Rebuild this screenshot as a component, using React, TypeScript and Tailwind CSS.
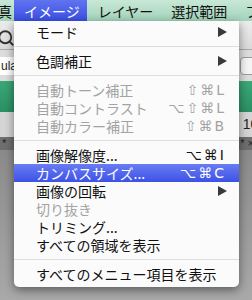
import { Search } from "lucide-react";

type Item =
  | { label: string; keys?: string; sub?: boolean; disabled?: boolean; active?: boolean }
  | "sep";

const items: Item[] = [
  { label: "モード", sub: true },
  "sep",
  { label: "色調補正", sub: true },
  "sep",
  { label: "自動トーン補正", keys: "⇧⌘L", disabled: true },
  { label: "自動コントラスト", keys: "⌥⇧⌘L", disabled: true },
  { label: "自動カラー補正", keys: "⇧⌘B", disabled: true },
  "sep",
  { label: "画像解像度...", keys: "⌥⌘I" },
  { label: "カンバスサイズ...", keys: "⌥⌘C", active: true },
  { label: "画像の回転", sub: true },
  { label: "切り抜き", disabled: true },
  { label: "トリミング..." },
  { label: "すべての領域を表示" },
  "sep",
  { label: "すべてのメニュー項目を表示" },
];

const jp = "font-['Noto_Sans_CJK_JP','Noto_Sans',sans-serif]";

function Triangle({ color }: { color: string }) {
  return (
    <svg width="9" height="10" viewBox="0 0 9 10">
      <path d="M0 0 L9 5 L0 10 Z" fill={color} />
    </svg>
  );
}

function Menu() {
  return (
    <div className="absolute left-[14px] top-[21px] w-[225px] rounded-b-[5px] bg-[#fbfbfb] pt-[2px] pb-[4px] shadow-[0_3px_10px_rgba(0,0,0,0.45)]">
      {items.map((it, i) =>
        it === "sep" ? (
          <div key={i} className="flex h-[11px] items-center">
            <div className="h-px w-full bg-[#dedede]" />
          </div>
        ) : (
          <div
            key={i}
            className={`flex h-[18px] items-center justify-between pl-[22px] ${it.sub ? "pr-[12px]" : "pr-[15px]"} ${
              it.active
                ? "bg-[linear-gradient(#687cf3,#3d52e6)] text-white"
                : it.disabled
                  ? "text-[#a3a3a3]"
                  : "text-[#111]"
            }`}
          >
            <span className={`${jp} text-[14px] leading-[16px]`}>{it.label}</span>
            {it.keys && (
              <span className="font-['DejaVu_Sans',sans-serif] text-[14px] leading-[16px] tracking-[2px] mr-[-2px]">
                {it.keys}
              </span>
            )}
            {it.sub && <Triangle color="#3a3a3a" />}
          </div>
        ),
      )}
    </div>
  );
}

export default function App() {
  return (
    <div className="relative h-[300px] w-[252px] overflow-hidden bg-[#8f8f8f]">
      <div className={`flex h-[21px] items-center bg-[linear-gradient(#c8e8d6,#a2d3ba)] text-[14px] leading-[16px] text-[#111] ${jp}`}>
        <span className="ml-[-16px] w-[30px] shrink-0">写真</span>
        <span className="flex h-full shrink-0 items-center bg-[linear-gradient(#6073f0,#3a4fe4)] pl-[10px] pr-[7px] text-white">
          イメージ
        </span>
        <span className="ml-[11px] shrink-0">レイヤー</span>
        <span className="ml-[18px] shrink-0">選択範囲</span>
        <span className="ml-[18px] shrink-0">フィルター</span>
      </div>

      <div className="flex h-[28px] items-center bg-[linear-gradient(#ececec,#d9d9d9)] pt-[6px]">
        <Search size={18} strokeWidth={2.4} className="ml-[-3px] text-[#333]" />
      </div>
      <div className="h-px bg-[#a9a9a9]" />
      <div className="flex h-[31px] items-center justify-between bg-[#dcdcdc]">
        <div className="flex h-[18px] items-center bg-white pl-[1px] font-['Liberation_Sans',sans-serif] text-[12px] text-[#222]">
          ular
        </div>
        <div className="mr-[-10px] h-[18px] w-[22px] rounded-[4px] border border-[#9a9a9a] bg-[#f4f4f4]" />
      </div>
      <div className="h-[31px] bg-[linear-gradient(#3aa777,#2b8f62)]" />
      <div className="flex h-[25px] items-center justify-end bg-[#d4d4d4] font-['Liberation_Sans',sans-serif] text-[14px] text-[#222]">
        <span className="mr-[-14px]">100</span>
      </div>
      <div className="flex h-[13px] items-center justify-between bg-[#6e6e6e] px-[2px] font-['Liberation_Sans',sans-serif] text-[11px] leading-none text-[#222]">
        <span>*</span>
        <span className="mr-[-4px]">* ×</span>
      </div>
      <div className="h-[150px] bg-[linear-gradient(#8a8a8a,#a9a9a9)]" />

      <Menu />
    </div>
  );
}
